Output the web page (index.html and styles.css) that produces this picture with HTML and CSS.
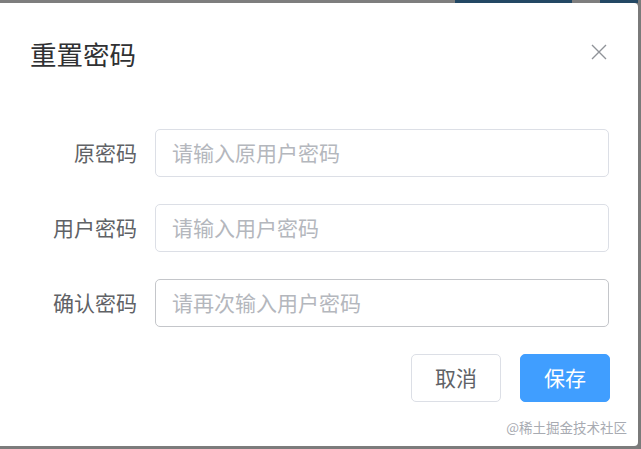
FILE: index.html
```html
<!DOCTYPE html>
<html lang="zh-CN">
<head>
<meta charset="utf-8">
<title>重置密码</title>
<link rel="stylesheet" href="styles.css">
</head>
<body>
<div class="strip">
  <span class="s-gray" style="width:455px"></span>
  <span class="s-blue" style="width:117px"></span>
  <span class="s-gray" style="width:28px"></span>
  <span class="s-blue" style="width:38px"></span>
</div>
<div class="page">
  <div class="dialog">
    <div class="header">
      <span class="title">重置密码</span>
      <button class="close" aria-label="关闭">
        <svg width="16" height="16" viewBox="0 0 16 16"><path d="M1 1L15 15M15 1L1 15" stroke="#909399" stroke-width="1.4" fill="none"/></svg>
      </button>
    </div>
    <form class="form">
      <div class="row">
        <label class="label">原密码</label>
        <input class="input" type="password" placeholder="请输入原用户密码">
      </div>
      <div class="row">
        <label class="label">用户密码</label>
        <input class="input" type="password" placeholder="请输入用户密码">
      </div>
      <div class="row">
        <label class="label">确认密码</label>
        <input class="input input-hover" type="password" placeholder="请再次输入用户密码">
      </div>
    </form>
    <div class="footer">
      <button class="btn">取消</button>
      <button class="btn btn-primary">保存</button>
    </div>
    <div class="watermark">@稀土掘金技术社区</div>
  </div>
  <div class="edge"></div>
</div>
</body>
</html>
```
FILE: styles.css
```css
* { box-sizing: border-box; }
html, body { margin: 0; padding: 0; }
body {
  width: 641px;
  height: 449px;
  overflow: hidden;
  background: #7c7c7c;
  font-family: "Noto Sans CJK SC", "Noto Sans", sans-serif;
}
.strip { display: flex; height: 3px; }
.s-gray { background: #7e7e7e; }
.s-blue { background: #234864; }
.page { display: flex; height: 446px; }
.dialog {
  width: 638px;
  height: 443px;
  background: #fff;
  border-radius: 0 4px 4px 0;
  padding-top: 35px;
}
.edge { flex: 1; background: #7a7a7a; }
.header {
  display: flex;
  align-items: center;
  justify-content: space-between;
  padding: 0 30px 0 30px;
  height: 32px;
}
.title {
  font-size: 26.5px;
  line-height: 32px;
  color: #303133;
}
.close {
  border: 0;
  background: none;
  padding: 0;
  width: 16px;
  height: 16px;
  display: flex;
  margin-right: 1px;
  margin-top: -5px;
}
.form {
  margin-top: 59px;
  display: flex;
  flex-direction: column;
  gap: 27px;
}
.row { display: flex; align-items: center; height: 48px; }
.label {
  width: 155px;
  padding-right: 18px;
  text-align: right;
  font-size: 21px;
  line-height: 26px;
  margin-top: -2px;
  color: #606266;
}
.input {
  width: 454px;
  height: 48px;
  border: 1px solid #dcdfe6;
  border-radius: 5px;
  padding: 0 16px 2px;
  font-family: inherit;
  font-size: 21px;
  color: #606266;
  outline: none;
}
.input::placeholder { color: #b4b7bd; }
.input-hover { border-color: #c4c6ca; }
.footer {
  display: flex;
  justify-content: flex-end;
  gap: 19px;
  padding-right: 28px;
  margin-top: 27px;
}
.btn {
  width: 90px;
  height: 48px;
  border: 1px solid #dcdfe6;
  border-radius: 5px;
  background: #fff;
  color: #606266;
  font-family: inherit;
  font-size: 21px;
  padding: 0 0 2px;
}
.btn-primary {
  background: #409eff;
  border-color: #409eff;
  color: #fff;
}
.watermark {
  text-align: right;
  padding-right: 11px;
  margin-top: 16px;
  font-size: 13.5px;
  line-height: 18px;
  color: #a8abb2;
}
```
